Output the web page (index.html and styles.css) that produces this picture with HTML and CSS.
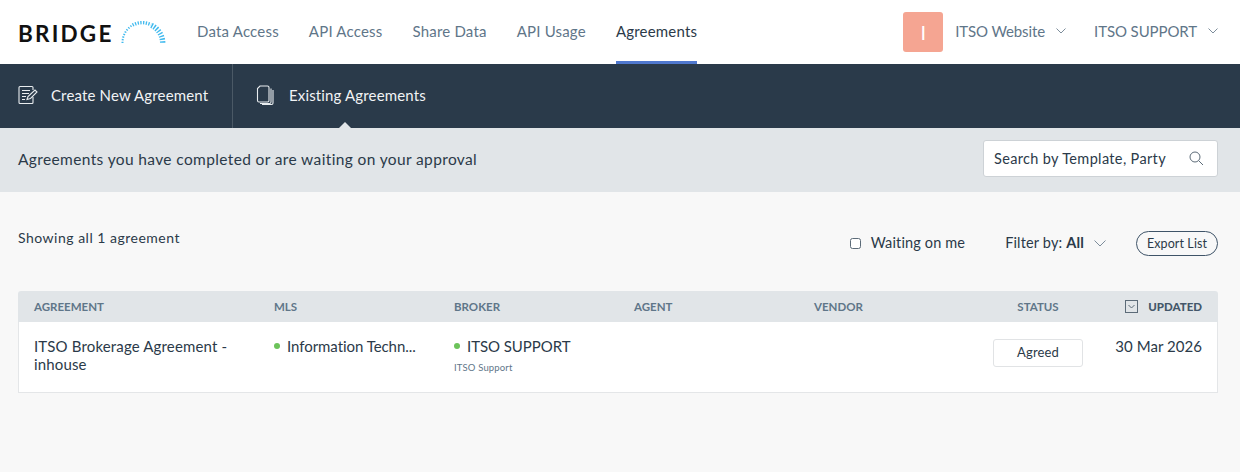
FILE: index.html
```html
<!DOCTYPE html>
<html lang="en">
<head>
    <meta charset="UTF-8">
    <meta name="viewport" content="width=device-width, initial-scale=1.0">
    <title>Bridge - Agreements</title>
    <link rel="stylesheet" href="styles.css">
</head>
<body>
    <header class="topbar">
        <a class="logo" href="#">
            <span class="logo-text">BRIDGE</span>
            <svg class="logo-arc" width="46" height="26" viewBox="0 0 46 26" fill="none" stroke="#3fb9ee">
                <path d="M2.5 24 A20.5 20.5 0 0 1 12 6.4" stroke-width="2" stroke-dasharray="1.3 1.4"/>
                <path d="M12.6 6.1 A20 20 0 0 1 31 5.7" stroke-width="3.4" stroke-dasharray="1.3 1.4"/>
                <path d="M31.4 6.4 A19.5 19.5 0 0 1 42.7 24" stroke-width="5.4" stroke-dasharray="1.4 1.5"/>
            </svg>
        </a>
        <nav class="main-nav">
            <a href="#">Data Access</a>
            <a href="#">API Access</a>
            <a href="#">Share Data</a>
            <a href="#">API Usage</a>
            <a href="#" class="active">Agreements</a>
        </nav>
        <div class="account">
            <div class="avatar">I</div>
            <div class="account-menu">
                ITSO Website
                <svg class="chevron" width="10" height="6" viewBox="0 0 10 6"><path d="M.5.5 5 5 9.500.5"/></svg>
            </div>
            <div class="account-menu">
                ITSO SUPPORT
                <svg class="chevron" width="10" height="6" viewBox="0 0 10 6"><path d="M.5.5 5 5 9.500.5"/></svg>
            </div>
        </div>
    </header>

    <div class="subnav">
        <a href="#" class="subnav-item first">
            <svg width="20" height="20" viewBox="0 0 20 20" fill="none" stroke="#e8ecef" stroke-width="1.1">
                <path d="M15 5V2.500Q15 1.500 14 1.500H2Q1 1.500 1 2.500V17.500Q1 18.500 2 18.500H14Q15 18.500 15 17.500V12"/>
                <path d="M4 5.500H12M4 8.500H11M4 11.500H8M4 14.500H7"/>
                <path d="M9 14.500 10 11.500 17 5 19 7 12.500 13.500Z"/>
            </svg>
            Create New Agreement
        </a>
        <a href="#" class="subnav-item current">
            <svg width="18" height="20" viewBox="0 0 18 20" fill="none" stroke="#e8ecef" stroke-width="1.1">
                <path d="M4 1H11.500Q13 1 13 2.500V15.500Q13 17 11.500 17H3Q1.500 17 1.500 15.500V3.500Z"/>
                <path d="M15 3.500V17Q15 18.500 13.500 18.500H4"/>
                <path d="M17 5V18Q17 19.500 15.500 19.500H6"/>
            </svg>
            Existing Agreements
        </a>
    </div>

    <div class="page-bar">
        <div class="page-title">Agreements you have completed or are waiting on your approval</div>
        <div class="search">
            <span>Search by Template, Party</span>
            <svg width="15" height="15" viewBox="0 0 15 15" fill="none" stroke="#5c6b78" stroke-width="1">
                <circle cx="6" cy="6" r="5"/>
                <path d="M9.700 9.700 14 14"/>
            </svg>
        </div>
    </div>

    <main class="content">
        <div class="toolbar">
            <div class="count">Showing all 1 agreement</div>
            <div class="filters">
                <label class="waiting"><span class="checkbox"></span>Waiting on me</label>
                <div class="filter-by">
                    Filter by: <b>All</b>
                    <svg class="chevron" width="12" height="7" viewBox="0 0 12 7"><path d="M.5.5 6 6 11.500.5"/></svg>
                </div>
                <button class="export">Export List</button>
            </div>
        </div>

        <div class="list">
            <div class="list-head">
                <div>AGREEMENT</div>
                <div>MLS</div>
                <div>BROKER</div>
                <div>AGENT</div>
                <div>VENDOR</div>
                <div class="center">STATUS</div>
                <div class="updated">
                    <svg width="13" height="13" viewBox="0 0 13 13" fill="none" stroke="#5c6b78" stroke-width="1">
                        <rect x=".5" y=".5" width="12" height="12"/>
                        <path d="M3.500 5 6.500 8 9.500 5"/>
                    </svg>
                    <b>UPDATED</b>
                </div>
            </div>
            <div class="list-row">
                <div class="agreement-name">ITSO Brokerage Agreement - inhouse</div>
                <div class="party"><i class="dot"></i>Information Techn...</div>
                <div>
                    <div class="party"><i class="dot"></i>ITSO SUPPORT</div>
                    <div class="party-sub">ITSO Support</div>
                </div>
                <div></div>
                <div></div>
                <div><span class="status-tag">Agreed</span></div>
                <div class="date">30 Mar 2026</div>
            </div>
        </div>
    </main>
</body>
</html>
```

FILE: styles.css
```css
* {
    margin: 0;
    padding: 0;
    box-sizing: border-box;
    font-family: 'Lato', 'Open Sans', sans-serif;
}

body {
    min-height: 100vh;
    background: #f8f8f8;
    color: #2b3a49;
    font-size: 15px;
}

a {
    text-decoration: none;
    color: inherit;
}

.chevron {
    fill: none;
    stroke: #7d8d9b;
    stroke-width: 1;
}

.topbar {
    height: 64px;
    background: #fff;
    display: flex;
    align-items: stretch;
    padding: 0 22px 0 18px;
}

.logo {
    display: flex;
    align-items: flex-end;
    width: 179px;
    padding-bottom: 21px;
}

.logo-text {
    color: #111;
    font-size: 22.500px;
    font-weight: 700;
    letter-spacing: 2.200px;
    line-height: 18px;
}

.logo-arc {
    margin: 0 0 -2px 6px;
}

.main-nav {
    display: flex;
    gap: 30px;
}

.main-nav a {
    color: #5f7689;
    line-height: 62px;
    height: 64px;
    letter-spacing: 0.200px;
}

.main-nav a.active {
    color: #2b3a49;
    border-bottom: 3px solid #4f78cf;
}

.account {
    margin-left: auto;
    display: flex;
    align-items: center;
    color: #5f7689;
    letter-spacing: -0.100px;
}

.avatar {
    width: 40px;
    height: 40px;
    margin-right: 12px;
    border-radius: 3px;
    background: #f5a592;
    color: #fff;
    font-size: 20px;
    text-align: center;
    line-height: 40px;
}

.account-menu {
    display: flex;
    align-items: center;
    gap: 11px;
    margin: -2px 28px 0 0;
}

.account-menu:last-child {
    margin-right: 0;
}

.subnav {
    height: 64px;
    background: #2a3a4a;
    display: flex;
    color: #f1f3f5;
}

.subnav-item {
    display: flex;
    align-items: center;
    position: relative;
    padding-bottom: 2px;
    letter-spacing: 0.150px;
}

.subnav-item.first {
    width: 233px;
    padding-left: 18px;
    gap: 13px;
    border-right: 1px solid #4b5966;
}

.subnav-item.current {
    padding-left: 23px;
    gap: 15px;
}

.subnav-item.current::after {
    content: "";
    position: absolute;
    left: 106px;
    bottom: 0;
    border: 6px solid transparent;
    border-top: 0;
    border-bottom-color: #e1e5e8;
}

.page-bar {
    height: 64px;
    background: #e1e5e8;
    display: flex;
    align-items: center;
    justify-content: space-between;
    padding: 0 22px 3px 18px;
}

.page-title {
    font-size: 15.500px;
    letter-spacing: 0.370px;
}

.search {
    width: 235px;
    height: 37px;
    background: #fff;
    border: 1px solid #cdd2d6;
    border-radius: 3px;
    display: flex;
    align-items: center;
    justify-content: space-between;
    padding: 0 13px 0 10px;
    font-size: 14.500px;
    letter-spacing: 0.350px;
}

.content {
    padding: 39px 22px 0 18px;
}

.toolbar {
    display: flex;
    justify-content: space-between;
    height: 60px;
}

.count {
    font-size: 14px;
    line-height: 14px;
    letter-spacing: 0.500px;
}

.filters {
    display: flex;
    align-items: flex-start;
}

.waiting {
    display: flex;
    align-items: center;
    gap: 10px;
    margin-right: 40px;
    font-size: 14.500px;
    line-height: 24px;
    letter-spacing: 0.150px;
}

.checkbox {
    width: 11px;
    height: 11px;
    border: 1px solid #5c6b78;
    border-radius: 2.500px;
    background: #fff;
}

.filter-by {
    display: flex;
    align-items: center;
    gap: 4px;
    margin-right: 30px;
    font-size: 14.500px;
    line-height: 24px;
    letter-spacing: 0.150px;
}

.filter-by .chevron {
    margin-left: 6px;
}

.export {
    width: 82px;
    height: 25px;
    background: transparent;
    border: 1px solid #3f5468;
    border-radius: 13px;
    color: #2b3a49;
    font-size: 12.500px;
    letter-spacing: 0.100px;
}

.list-head,
.list-row {
    display: grid;
    grid-template-columns: 240px 180px 180px 180px 179px 90px 1fr;
}

.list-head {
    height: 31px;
    padding: 0 16px;
    align-items: center;
    background: #e1e5e8;
    border-radius: 3px 3px 0 0;
    color: #5f7689;
    font-size: 11.500px;
    font-weight: 700;
    letter-spacing: 0;
}

.center {
    text-align: center;
}

.updated {
    display: flex;
    justify-content: flex-end;
    align-items: center;
    gap: 10px;
    color: #44576a;
}

.list-row {
    height: 71px;
    background: #fff;
    border: 1px solid #e4e6e8;
    border-top: 0;
    padding: 15px 15px 0;
    align-items: start;
    line-height: 18px;
    letter-spacing: 0.150px;
}

.agreement-name {
    width: 210px;
}

.party {
    display: flex;
    align-items: center;
    white-space: nowrap;
    letter-spacing: -0.050px;
}

.dot {
    width: 6px;
    height: 6px;
    border-radius: 50%;
    background: #6cc35a;
    margin-right: 7px;
}

.party-sub {
    margin-top: 7px;
    color: #5f7689;
    font-size: 9.500px;
    line-height: 12px;
}

.status-tag {
    display: block;
    height: 28px;
    margin-top: 2px;
    border: 1px solid #e1e3e5;
    border-radius: 3px;
    text-align: center;
    font-size: 13px;
    line-height: 24px;
}

.date {
    text-align: right;
    letter-spacing: 0.050px;
}
```
